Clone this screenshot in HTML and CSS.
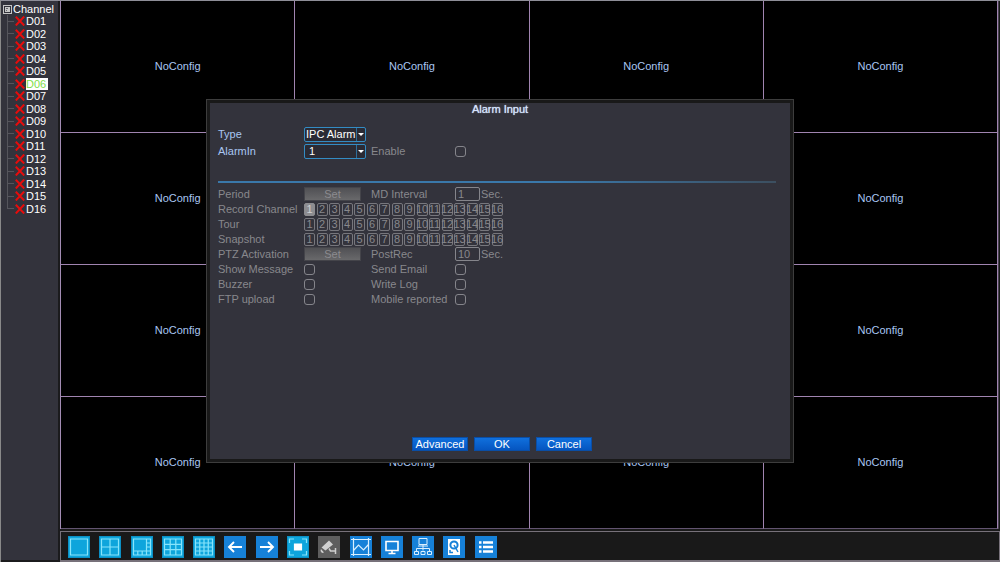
FILE: index.html
```html
<!DOCTYPE html>
<html lang="en">
<head>
<meta charset="utf-8">
<title>Alarm Input</title>
<link rel="stylesheet" href="styles.css">
</head>
<body>
<svg width="0" height="0" class="defs" aria-hidden="true">
  <symbol id="x" viewBox="0 0 10 10"><path d="M.8 .8L9.200 9.500M9.200 .5L.8 9.500" stroke="#e60c0c" stroke-width="2" fill="none"/></symbol>
</svg>
<div class="screen">
  <nav class="sidebar">
    <div class="tree-title"><svg width="9" height="9" viewBox="0 0 9 9"><rect x=".5" y=".5" width="8" height="8" fill="#33333b" stroke="#c4c4c4"/><path d="M2 2h5v5H2z" fill="#c8c8c8"/><path d="M3 3.500h2M3 5.500h1" stroke="#66666c"/></svg>Channel</div>
    <ul class="tree">
      <li><svg class="x"><use href="#x"/></svg><span>D01</span></li>
      <li><svg class="x"><use href="#x"/></svg><span>D02</span></li>
      <li><svg class="x"><use href="#x"/></svg><span>D03</span></li>
      <li><svg class="x"><use href="#x"/></svg><span>D04</span></li>
      <li><svg class="x"><use href="#x"/></svg><span>D05</span></li>
      <li><svg class="x"><use href="#x"/></svg><span class="selected">D06</span></li>
      <li><svg class="x"><use href="#x"/></svg><span>D07</span></li>
      <li><svg class="x"><use href="#x"/></svg><span>D08</span></li>
      <li><svg class="x"><use href="#x"/></svg><span>D09</span></li>
      <li><svg class="x"><use href="#x"/></svg><span>D10</span></li>
      <li><svg class="x"><use href="#x"/></svg><span>D11</span></li>
      <li><svg class="x"><use href="#x"/></svg><span>D12</span></li>
      <li><svg class="x"><use href="#x"/></svg><span>D13</span></li>
      <li><svg class="x"><use href="#x"/></svg><span>D14</span></li>
      <li><svg class="x"><use href="#x"/></svg><span>D15</span></li>
      <li><svg class="x"><use href="#x"/></svg><span>D16</span></li>
    </ul>
  </nav>
  <main class="wall">
    <div>NoConfig</div><div>NoConfig</div><div>NoConfig</div><div>NoConfig</div>
    <div>NoConfig</div><div>NoConfig</div><div>NoConfig</div><div>NoConfig</div>
    <div>NoConfig</div><div>NoConfig</div><div>NoConfig</div><div>NoConfig</div>
    <div>NoConfig</div><div>NoConfig</div><div>NoConfig</div><div>NoConfig</div>
  </main>
  <footer class="toolbar">
    <div class="tools">
      <button class="tool view" aria-label="Single view"><svg viewBox="0 0 22 22"><path d="M2.500 3h17v16h-17z"/></svg></button>
      <button class="tool view" aria-label="4 views"><svg viewBox="0 0 22 22"><path d="M2.500 3h17v16h-17zM11 3v16M2.500 11h17"/></svg></button>
      <button class="tool view" aria-label="8 views"><svg viewBox="0 0 22 22"><path d="M2.500 3h17v16h-17zM15.500 3v16M2.500 15h17M15.500 7h4M15.500 11h4M6.800 15v4M11.200 15v4"/></svg></button>
      <button class="tool view" aria-label="9 views"><svg viewBox="0 0 22 22"><path d="M2.500 3h17v16h-17zM8.200 3v16M13.800 3v16M2.500 8.300h17M2.500 13.700h17"/></svg></button>
      <button class="tool view" aria-label="16 views"><svg viewBox="0 0 22 22"><path d="M2.500 3h17v16h-17zM6.750 3v16M11 3v16M15.250 3v16M2.500 7h17M2.500 11h17M2.500 15h17"/></svg></button>
      <button class="tool" aria-label="Previous"><svg viewBox="0 0 22 22"><path d="M18 11H5M10 6l-5 5 5 5" stroke-width="1.900"/></svg></button>
      <button class="tool" aria-label="Next"><svg viewBox="0 0 22 22"><path d="M4 11h13M12 6l5 5-5 5" stroke-width="1.900"/></svg></button>
      <button class="tool view" aria-label="Full screen"><svg viewBox="0 0 22 22"><path d="M2.500 7V3H7M15 3h4.500v4M19.500 15v4H15M7 19H2.500v-4"/><path d="M7.500 8h7v6h-7z" fill="#fff" stroke="#fff"/></svg></button>
      <button class="tool off" aria-label="PTZ"><svg viewBox="0 0 22 22"><path d="M3.500 11.500L11 4.500l4 4-7.500 6zM3 13l3 3.500-2 .5-1.500-2z" fill="#d0d0d0" stroke="none"/><path d="M11 12.500l1.500 2.500h5M17.500 12v6" stroke="#d0d0d0" stroke-width="1.500"/></svg></button>
      <button class="tool" aria-label="Image"><svg viewBox="0 0 22 22"><path d="M1 3.500h20M1 18.500h20M3.500 2v18M18.500 2v18M3.500 14.500L8.500 9l5 5 5-5.500" stroke="#d8efff" stroke-width="1.200"/></svg></button>
      <button class="tool" aria-label="Display"><svg viewBox="0 0 22 22"><path d="M5 5.500h12v9H5zM11 14.500v3M7.500 17.500h7" stroke-width="1.600"/></svg></button>
      <button class="tool" aria-label="Network"><svg viewBox="0 0 22 22"><path d="M7 2.500h8v6H7zM6 10h10M11 8.500v6M4.500 15v-2.500h13V15M2.500 15.500h4v3h-4zM9 15.500h4v3H9zM15.500 15.500h4v3h-4z" stroke="#d8efff"/></svg></button>
      <button class="tool" aria-label="Hard disk"><svg viewBox="0 0 22 22"><path d="M5 3h12v16H5z" fill="#fff" stroke="none"/><circle cx="11" cy="9" r="3.600" stroke="#1681d8" stroke-width="2"/><path d="M11 9l4 7M7 14v2.500h3" stroke="#1681d8" stroke-width="1.500"/></svg></button>
      <button class="tool" aria-label="Main menu"><svg viewBox="0 0 22 22"><path d="M4 6.500h2.500M4 11h2.500M4 15.500h2.500M8 6.500h10M8 11h10M8 15.500h10" stroke-width="2.500"/></svg></button>
    </div>
  </footer>
</div>
<div class="overlay">
  <form class="dialog" role="dialog" aria-labelledby="title">
    <h1 id="title">Alarm Input</h1>
    <div class="fields top">
      <label for="type">Type</label>
      <div class="select"><select id="type"><option>IPC Alarm</option></select></div>
      <label class="new-row" for="alarm">AlarmIn</label>
      <div class="select indent"><select id="alarm"><option>1</option></select></div>
      <label class="dim" for="enable">Enable</label>
      <input class="check" id="enable" type="checkbox">
    </div>
    <hr>
    <div class="fields bottom dim">
      <span>Period</span><button class="set" type="button" disabled>Set</button>
      <label for="md">MD Interval</label><div class="secs"><input id="md" value="1" disabled><span>Sec.</span></div>
      <span>Record Channel</span>
      <div class="channels">
        <label><input type="checkbox" checked disabled><span>1</span></label><label><input type="checkbox" disabled><span>2</span></label><label><input type="checkbox" disabled><span>3</span></label><label><input type="checkbox" disabled><span>4</span></label><label><input type="checkbox" disabled><span>5</span></label><label><input type="checkbox" disabled><span>6</span></label><label><input type="checkbox" disabled><span>7</span></label><label><input type="checkbox" disabled><span>8</span></label><label><input type="checkbox" disabled><span>9</span></label><label><input type="checkbox" disabled><span>10</span></label><label><input type="checkbox" disabled><span>11</span></label><label><input type="checkbox" disabled><span>12</span></label><label><input type="checkbox" disabled><span>13</span></label><label><input type="checkbox" disabled><span>14</span></label><label><input type="checkbox" disabled><span>15</span></label><label><input type="checkbox" disabled><span>16</span></label>
      </div>
      <span>Tour</span>
      <div class="channels">
        <label><input type="checkbox" disabled><span>1</span></label><label><input type="checkbox" disabled><span>2</span></label><label><input type="checkbox" disabled><span>3</span></label><label><input type="checkbox" disabled><span>4</span></label><label><input type="checkbox" disabled><span>5</span></label><label><input type="checkbox" disabled><span>6</span></label><label><input type="checkbox" disabled><span>7</span></label><label><input type="checkbox" disabled><span>8</span></label><label><input type="checkbox" disabled><span>9</span></label><label><input type="checkbox" disabled><span>10</span></label><label><input type="checkbox" disabled><span>11</span></label><label><input type="checkbox" disabled><span>12</span></label><label><input type="checkbox" disabled><span>13</span></label><label><input type="checkbox" disabled><span>14</span></label><label><input type="checkbox" disabled><span>15</span></label><label><input type="checkbox" disabled><span>16</span></label>
      </div>
      <span>Snapshot</span>
      <div class="channels">
        <label><input type="checkbox" disabled><span>1</span></label><label><input type="checkbox" disabled><span>2</span></label><label><input type="checkbox" disabled><span>3</span></label><label><input type="checkbox" disabled><span>4</span></label><label><input type="checkbox" disabled><span>5</span></label><label><input type="checkbox" disabled><span>6</span></label><label><input type="checkbox" disabled><span>7</span></label><label><input type="checkbox" disabled><span>8</span></label><label><input type="checkbox" disabled><span>9</span></label><label><input type="checkbox" disabled><span>10</span></label><label><input type="checkbox" disabled><span>11</span></label><label><input type="checkbox" disabled><span>12</span></label><label><input type="checkbox" disabled><span>13</span></label><label><input type="checkbox" disabled><span>14</span></label><label><input type="checkbox" disabled><span>15</span></label><label><input type="checkbox" disabled><span>16</span></label>
      </div>
      <span>PTZ Activation</span><button class="set" type="button" disabled>Set</button>
      <label for="post">PostRec</label><div class="secs"><input id="post" value="10" disabled><span>Sec.</span></div>
      <label for="msg">Show Message</label><input class="check" id="msg" type="checkbox" disabled>
      <label for="mail">Send Email</label><input class="check" id="mail" type="checkbox" disabled>
      <label for="buzz">Buzzer</label><input class="check" id="buzz" type="checkbox" disabled>
      <label for="log">Write Log</label><input class="check" id="log" type="checkbox" disabled>
      <label for="ftp">FTP upload</label><input class="check" id="ftp" type="checkbox" disabled>
      <label for="mobile">Mobile reported</label><input class="check" id="mobile" type="checkbox" disabled>
    </div>
    <div class="actions">
      <button type="button">Advanced</button><button type="button">OK</button><button type="button">Cancel</button>
    </div>
  </form>
</div>
</body>
</html>
```
FILE: styles.css
```css
* { box-sizing: border-box; }
body {
  margin: 0;
  background: #191919;
  color: #fff;
  font: 11px/13px "Liberation Sans", Arial, sans-serif;
}
button, input, select { font: inherit; color: inherit; margin: 0; padding: 0; appearance: none; }
.defs { position: absolute; }
.screen {
  display: grid;
  grid-template: 1fr 33px / 60px 1fr;
  height: 100vh;
  border-top: 1px solid #8e8e98;
  border-left: 1px solid #8a8a8a;
}
.sidebar {
  grid-row: 1 / 3;
  background: #33333c;
  border-right: 2px solid #1b1b1d;
  border-bottom: 2px solid #1b1b1d;
  margin-right: 1px;
  padding: 2px 0 0 2px;
}
.tree-title { display: flex; align-items: center; gap: 1px; line-height: 12px; }
.tree {
  display: grid;
  grid-template-rows: repeat(16, 1fr);
  height: 200px;
  margin: 0 0 0 4px;
  padding: 0;
  list-style: none;
}
.tree li {
  display: flex;
  align-items: center;
  background: linear-gradient(#55555c, #55555c) 0 50% / 7px 1px no-repeat, linear-gradient(#55555c, #55555c) 0 0 / 1px 100% no-repeat;
}
.tree li:last-child { background-size: 7px 1px, 1px 50%; }
.tree span { padding-right: 2px; line-height: 12px; }
.tree .selected { background: #fff; color: #7ee04a; }
.x { width: 10px; height: 10px; margin-left: 8px; margin-right: 1px; }
.wall {
  display: grid;
  grid-template: repeat(4, 1fr) / repeat(4, 1fr);
  margin: 0 1px 0 -1px;
  border-left: 1px solid #a38cb4;
  border-right: 1px solid #45424d;
  background: #000;
}
.wall div {
  display: grid;
  place-items: center;
  border-right: 1px solid #a084b0;
  border-bottom: 1px solid #a084b0;
  color: #a9c6f2;
}
.wall div:nth-child(n+13) { border-bottom-color: #625470; }
.toolbar {
  margin-left: -1px;
  padding: 4px 7px 0;
  border: solid #77717a;
  border-width: 1px 1px 2px;
  margin-top: 2px;
  background: #191919;
}
.tools {
  display: grid;
  grid-template-columns: repeat(14, 1fr);
  width: 438px;
}
.tool {
  width: 22px;
  height: 22px;
  border: 0;
  background: #1681d8;
}
.tool.view { background: #0ea5dc; box-shadow: inset 0 0 0 1px #0c90c4; }
.tool.off { background: #5e5e5e; }
.tool svg { display: block; width: 100%; height: 100%; fill: none; stroke: #fff; }
.tool.view svg { stroke: #86e4fb; stroke-width: 1.2; }
.overlay {
  position: fixed;
  inset: 0;
  display: grid;
  place-items: center;
}
.dialog {
  display: flex;
  flex-direction: column;
  width: 588px;
  max-width: 100%;
  min-height: 364px;
  border: 1px solid #3d3d3d;
  outline: 3px solid #191919;
  outline-offset: -4px;
  background: #33333c;
  padding: 2px 11px 11px;
}
h1 {
  margin: 0 0 10px;
  font-size: 11px;
  font-weight: 400;
  line-height: 14px;
  text-align: center;
  color: #d5e4ff;
  text-shadow: 0 0 1px #d5e4ff;
}
.fields {
  display: grid;
  grid-template-columns: 86px 67px 84px 1fr;
  align-items: center;
  white-space: nowrap;
}
.fields.top { grid-auto-rows: 17px; color: #a9c6f2; }
.new-row { grid-column: 1; }
.bottom { grid-template-rows: 16px 15px 15px 14px 16px 15px 15px 15px; }
.fields .dim, .fields.dim { color: #88888c; }
hr {
  width: 558px;
  max-width: 100%;
  height: 2px;
  margin: 21px 0 3px;
  border: 0;
  background: linear-gradient(90deg, #3a78aa 60%, #3c4f60);
}
.select { position: relative; width: 62px; height: 15px; }
.select select {
  width: 100%;
  height: 100%;
  padding: 0 0 0 1px;
  border: 1px solid #338cc4;
  border-radius: 2px;
  background: #2b2b34;
  color: #fff;
  line-height: 13px;
}
.select.indent select { padding-left: 4px; }
.select::before {
  content: "";
  position: absolute;
  right: 9px;
  top: 1px;
  bottom: 1px;
  border-left: 1px solid #2d6e9a;
}
.select::after {
  content: "";
  position: absolute;
  right: 2px;
  top: 6px;
  border: solid transparent;
  border-width: 3px 3px 0;
  border-top-color: #fff;
}
.check {
  width: 11px;
  height: 11px;
  border: 1px solid #85858b;
  border-radius: 3px;
}
.set {
  width: 57px;
  height: 14px;
  border: 1px solid #44444a;
  background: linear-gradient(#505054, #69696b);
  color: #8b8b8f;
  line-height: 12px;
}
.secs { display: flex; align-items: center; gap: 1px; }
.secs input {
  width: 25px;
  height: 14px;
  padding-left: 2px;
  border: 1px solid #85858b;
  border-radius: 2px;
  background: none;
}
.channels {
  grid-column: 2 / 5;
  display: grid;
  grid-template-columns: repeat(16, 1fr);
  width: 200px;
}
.channels label { display: grid; grid-template-columns: 11px; justify-items: center; }
.channels input, .channels span { grid-area: 1 / 1; }
.channels input { width: 11px; height: 13px; border: 1px solid #77777d; border-radius: 2px; }
.channels input:checked { background: #8c8c90; border-color: #8c8c90; }
.channels input:checked + span { color: #d0d0d2; }
.actions { display: flex; justify-content: center; gap: 6px; margin: auto 0 0 4px; }
.actions button {
  width: 56px;
  height: 14px;
  border: 1px solid #0a4ea6;
  background: linear-gradient(#1070dd, #0555c0);
  color: #fff;
  line-height: 12px;
}
```
